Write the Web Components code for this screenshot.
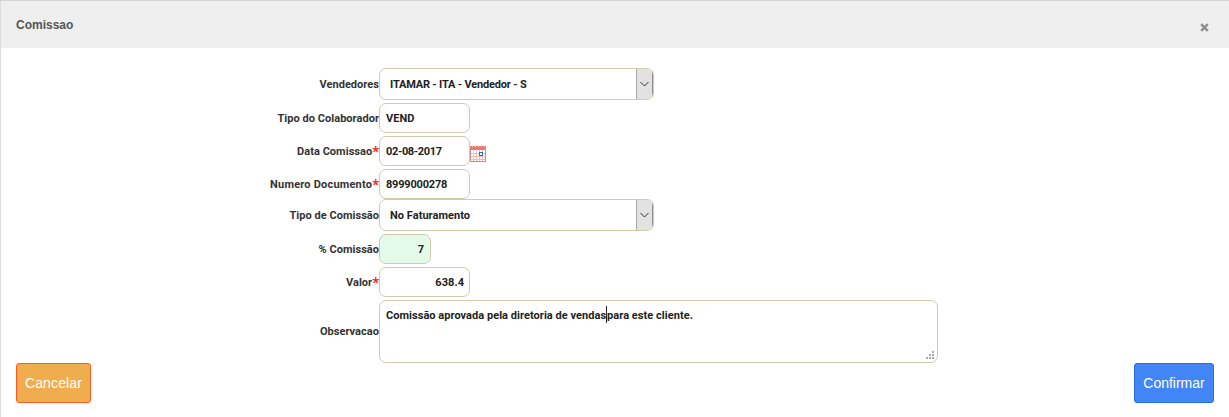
<!DOCTYPE html>
<html>
<head>
<meta charset="utf-8">
<style>
    html, body { margin: 0; padding: 0; background: #fff; }
    body { font-family: Roboto, sans-serif; overflow: hidden; }
</style>
</head>
<body>
<comissao-modal>
    <form-row label="Vendedores" top="68">
        <select-box width="275" height="32" spacing="-0.18" value="ITAMAR - ITA - Vendedor - S"></select-box>
    </form-row>
    <form-row label="Tipo do Colaborador" gap="3">
        <text-box width="91" value="VEND"></text-box>
    </form-row>
    <form-row label="Data Comissao" required gap="3">
        <text-box width="91" spacing="-0.35" value="02-08-2017"></text-box>
        <calendar-icon></calendar-icon>
    </form-row>
    <form-row label="Numero Documento" spacing="0.2" required gap="3">
        <text-box width="91" spacing="-0.2" value="8999000278"></text-box>
    </form-row>
    <form-row label="Tipo de Comissão" gap="0">
        <select-box width="275" height="32" value="No Faturamento"></select-box>
    </form-row>
    <form-row label="% Comissão" gap="3">
        <text-box width="52" value="7" align="right" tint></text-box>
    </form-row>
    <form-row label="Valor" required gap="3">
        <text-box width="91" value="638.4" align="right"></text-box>
    </form-row>
    <form-row label="Observacao" gap="3">
        <note-box before="Comissão aprovada pela diretoria de vendas" after="para este cliente."></note-box>
    </form-row>
</comissao-modal>

<script>
// Shared look of the text inside the fields
const fieldFont = `font: 700 11px Roboto, sans-serif; letter-spacing: 0.04px; color: #222;`

class ComissaoModal extends HTMLElement {
    constructor() {
        super()
        this.attachShadow({ mode: 'open' }).innerHTML = `
<style>
    :host { display: flex; flex-direction: column; width: 1229px; height: 417px; box-sizing: border-box; border-left: 1px solid #ddd; border-top: 1px solid #d4d4d4; position: relative; }
    header { display: flex; align-items: center; justify-content: space-between; height: 47px; flex: none; background: #efefef; padding: 0 15px; }
    h4 { margin: 0; font: 700 12px "Liberation Sans", sans-serif; color: #555; }
    .close { display: flex; margin-top: 5px; margin-right: 5px; }
    main { flex: 1; }
    footer { display: flex; justify-content: space-between; padding: 0 15px 14px 15px; }
    button { height: 40px; box-sizing: border-box; border-radius: 3px; border: 1px solid; color: #fff; font: 14px "Liberation Sans", sans-serif; padding: 0; }
    .cancel { width: 75px; background: #f0ad4e; border-color: #ff5a1f; letter-spacing: 0.15px; }
    .ok { width: 80px; background: #4285f4; border-color: #1f6fe8; }
</style>
<header>
    <h4>Comissao</h4>
    <span class="close"><svg width="9" height="9" viewBox="0 0 9 9"><path d="M1.2 1.2 L7.8 7.8 M7.8 1.2 L1.2 7.8" stroke="#8f8f8f" stroke-width="2.6" fill="none"/></svg></span>
</header>
<main><slot></slot></main>
<footer>
    <button class="cancel">Cancelar</button>
    <button class="ok">Confirmar</button>
</footer>`
    }
}

class FormRow extends HTMLElement {
    constructor() {
        super()
        this.attachShadow({ mode: 'open' }).innerHTML = `
<style>
    :host { display: grid; grid-template-columns: 378px auto; justify-content: start; align-items: center; }
    label { ${fieldFont} text-align: right; color: #333; white-space: nowrap; }
    b { color: #f22; font-weight: 700; font-size: 15px; line-height: 0; vertical-align: -2px; letter-spacing: 0; }
    .ctl { display: flex; align-items: center; }
</style>
<label></label>
<div class="ctl"><slot></slot></div>`
    }
    connectedCallback() {
        const label = this.shadowRoot.querySelector('label')
        label.textContent = this.getAttribute('label')
        if (this.getAttribute('spacing')) label.style.letterSpacing = this.getAttribute('spacing') + 'px'
        if (this.hasAttribute('required')) {
            const star = document.createElement('b')
            star.textContent = '*'
            label.appendChild(star)
        }
        // top is the space from the header to the first row, gap the space to the row before
        const top = this.getAttribute('top')
        if (top) this.style.marginTop = (top - 48) + 'px'
        const gap = this.getAttribute('gap')
        if (gap) this.style.marginTop = gap + 'px'
    }
}

class TextBox extends HTMLElement {
    constructor() {
        super()
        this.attachShadow({ mode: 'open' }).innerHTML = `
<style>
    :host { display: flex; align-items: center; box-sizing: border-box; height: 30px; background: #fff; border: 1px solid #cfcbaf; border-radius: 7px; padding: 0 5px 0 6px; ${fieldFont} }
    :host([tint]) { background: #e4fbe9; padding-right: 6px; }
    :host([align=right]) { justify-content: flex-end; }
</style>
<span></span>`
    }
    connectedCallback() {
        this.style.width = this.getAttribute('width') + 'px'
        const span = this.shadowRoot.querySelector('span')
        span.textContent = this.getAttribute('value')
        if (this.getAttribute('spacing')) span.style.letterSpacing = this.getAttribute('spacing') + 'px'
    }
}

class SelectBox extends HTMLElement {
    constructor() {
        super()
        this.attachShadow({ mode: 'open' }).innerHTML = `
<style>
    :host { display: flex; align-items: center; justify-content: space-between; box-sizing: border-box; background: #fff; border: 1px solid #cfcbaf; border-radius: 7px; padding-left: 10px; ${fieldFont} overflow: hidden; }
    .arrow { display: flex; align-items: center; justify-content: center; width: 17px; height: 100%; box-sizing: border-box; background: #e2e2e2; border-left: 1px solid #a9a9a9; border-right: 1px solid #8f8f8f; }
</style>
<span></span>
<div class="arrow"><svg width="9" height="6" viewBox="0 0 9 6"><path d="M0.5 1 L4.5 5 L8.5 1" stroke="#333" stroke-width="1" fill="none"/></svg></div>`
    }
    connectedCallback() {
        this.style.width = this.getAttribute('width') + 'px'
        this.style.height = this.getAttribute('height') + 'px'
        const span = this.shadowRoot.querySelector('span')
        span.textContent = this.getAttribute('value')
        if (this.getAttribute('spacing')) span.style.letterSpacing = this.getAttribute('spacing') + 'px'
    }
}

class NoteBox extends HTMLElement {
    constructor() {
        super()
        this.attachShadow({ mode: 'open' }).innerHTML = `
<style>
    :host { display: block; position: relative; box-sizing: border-box; width: 559px; height: 63px; background: #fff; border: 1px solid #cfcbaf; border-radius: 7px; padding: 5px 6px; ${fieldFont} }
    .caret { display: inline-block; width: 1px; height: 17px; background: #222; vertical-align: -4px; }
    svg { position: absolute; right: 2px; bottom: 2px; }
</style>
<span id="a"></span><span class="caret"></span><span id="b"></span>
<svg width="9" height="9" viewBox="0 0 9 9" fill="#aaa"><rect x="6" y="0" width="2" height="2"/><rect x="3" y="3" width="2" height="2"/><rect x="6" y="3" width="2" height="2"/><rect x="0" y="6" width="2" height="2"/><rect x="3" y="6" width="2" height="2"/><rect x="6" y="6" width="2" height="2"/></svg>`
    }
    connectedCallback() {
        this.shadowRoot.getElementById('a').textContent = this.getAttribute('before')
        this.shadowRoot.getElementById('b').textContent = this.getAttribute('after')
    }
}

class CalendarIcon extends HTMLElement {
    constructor() {
        super()
        this.attachShadow({ mode: 'open' }).innerHTML = `
<style>
    :host { display: flex; margin-top: 4px; }
</style>
<svg width="16" height="17" viewBox="0 0 16 17" shape-rendering="crispEdges">
    <rect x="0" y="0" width="16" height="17" fill="#fff"/>
    <rect x="0" y="1" width="16" height="4" fill="#ea7a76"/>
    <path d="M2 0v2M5 0v2M8 0v2M11 0v2M14 0v2" stroke="#f6c4c2" stroke-width="1"/>
    <path d="M0 8.5h16M0 11.5h16M0 14.5h16M3.5 5v11M6.5 5v11M9.5 5v11M12.5 5v11" stroke="#f6bcbc" stroke-width="1"/>
    <path d="M0.5 1v15.5h15V1" stroke="#cf8a8a" stroke-width="1" fill="none"/>
    <rect x="9.5" y="7.5" width="3" height="3" fill="#fff" stroke="#2f63d8" stroke-width="1"/>
</svg>`
    }
}

customElements.define('comissao-modal', ComissaoModal)
customElements.define('form-row', FormRow)
customElements.define('text-box', TextBox)
customElements.define('select-box', SelectBox)
customElements.define('note-box', NoteBox)
customElements.define('calendar-icon', CalendarIcon)
</script>
</body>
</html>
